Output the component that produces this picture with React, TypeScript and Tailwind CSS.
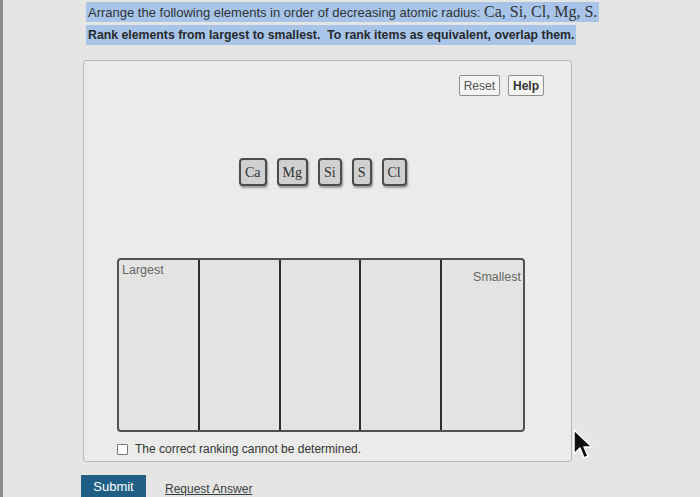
import { useState } from "react";

const elements = ["Ca", "Mg", "Si", "S", "Cl"];

export default function App() {
	const [cannotDetermine, setCannotDetermine] = useState(false);

	return (
		<div className="relative w-[700px] h-[497px] overflow-hidden bg-[#e5e6e4] border-l-[3px] border-[#8d8e8c] font-['Liberation_Sans',Arial,sans-serif] text-[#2f3235]">
			<div className="pl-[80px] pt-[2px]">
				{/* Question */}
				<p className="ml-[3px] h-[20px] flex items-center">
					<span className="bg-[#a8c5e9] px-[2px] text-[13px] leading-[19px]">
						Arrange the following elements in order of decreasing atomic radius:{" "}
						<span className="font-['Liberation_Serif','Times_New_Roman',serif] text-[16px]">
							Ca, Si, Cl, Mg, S.
						</span>
					</span>
				</p>
				<p className="ml-[3px] mt-[3px] h-[20px] flex items-center">
					<span className="bg-[#a8c5e9] px-[2px] text-[12.3px] leading-[20px] font-semibold text-[#26292c]">
						Rank elements from largest to smallest.&nbsp; To rank items as equivalent, overlap them.
					</span>
				</p>

				{/* Ranking panel */}
				<div className="mt-[15px] w-[489px] h-[402px] rounded-[3px] border border-[#b9bab8] bg-[#ebecea] flex flex-col">
					<div className="flex justify-end gap-[8px] pt-[14px] pr-[27px]">
						<button className="h-[21px] px-[4px] border border-[#8e8f8e] bg-[#f4f4f3] text-[12px] text-[#555] rounded-[2px]">
							Reset
						</button>
						<button className="h-[21px] px-[4px] border border-[#8e8f8e] bg-[#f4f4f3] text-[12px] font-semibold text-[#333] rounded-[2px]">
							Help
						</button>
					</div>

					<div className="flex gap-[10px] pl-[155px] mt-[62px]">
						{elements.map((el) => (
							<div
								key={el}
								className="h-[28px] px-[4px] min-w-[17px] flex items-center justify-center rounded-[4px] border-2 border-[#4a4c4d] bg-[#cfd0cf] shadow-[1px_2px_2px_rgba(0,0,0,0.35)] font-['Liberation_Serif','Times_New_Roman',serif] text-[14px] text-[#333]"
							>
								{el}
							</div>
						))}
					</div>

					<div className="ml-[33px] mt-[72px] w-[408px] h-[174px] rounded-[4px] border-2 border-[#505254] bg-[#e3e4e2] grid grid-cols-5">
						{[0, 1, 2, 3, 4].map((i) => (
							<div
								key={i}
								className={`relative ${i < 4 ? "border-r-2 border-[#2c2e30]" : ""}`}
							>
								{i === 0 && (
									<span className="absolute left-[3px] top-[1px] text-[12.5px] text-[#666]">
										Largest
									</span>
								)}
								{i === 4 && (
									<span className="absolute right-[2px] top-[8px] text-[12.5px] text-[#666]">
										Smallest
									</span>
								)}
							</div>
						))}
					</div>

					<label className="ml-[33px] mt-[8px] flex items-center gap-[7px] text-[12px] text-[#333]">
						<input
							type="checkbox"
							checked={cannotDetermine}
							onChange={(e) => setCannotDetermine(e.target.checked)}
							className="w-[11px] h-[11px] appearance-none border border-[#777] bg-white rounded-[1px]"
						/>
						The correct ranking cannot be determined.
					</label>
				</div>

				{/* Actions */}
				<div className="mt-[13px] flex items-center gap-[19px] -ml-[2px]">
					<button className="h-[24px] w-[65px] bg-[#1f5f86] text-white text-[13px] flex items-center justify-center">
						Submit
					</button>
					<button className="text-[12px] leading-[14px] text-[#3a3d40] underline pt-[4px]">Request Answer</button>
				</div>
			</div>

			{/* Mouse cursor */}
			<svg
				className="absolute left-[569px] top-[428px]"
				width="24"
				height="34"
				viewBox="0 0 24 34"
			>
				<path
					d="M2 2 L2 26 L8 20 L12 30 L16 28 L12 19 L20 19 Z"
					fill="#111"
					stroke="#fff"
					strokeWidth="1.5"
					strokeLinejoin="round"
				/>
			</svg>
		</div>
	);
}
